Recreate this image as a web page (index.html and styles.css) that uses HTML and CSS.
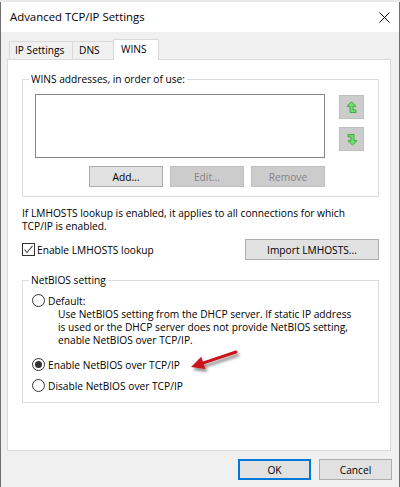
FILE: index.html
```html
<!DOCTYPE html>
<html>
<head>
<meta charset="utf-8">
<link rel="stylesheet" href="styles.css">
</head>
<body>
<div class="strip"></div>
<div class="window">
  <div class="titlebar">
    <span class="title">Advanced TCP/IP Settings</span>
    <svg class="close" width="11" height="11" viewBox="0 0 11 11"><path d="M0.5 0.5 L10.5 10.5 M10.5 0.5 L0.5 10.5" stroke="#000" stroke-width="1" fill="none"/></svg>
  </div>
  <div class="body">
    <div class="tabs">
      <div class="tab tab-ip">IP Settings</div>
      <div class="tab tab-dns">DNS</div>
      <div class="tab tab-wins selected">WINS</div>
    </div>
    <div class="panel">
      <fieldset class="group">
        <legend>WINS addresses, in order of use:</legend>
        <div class="group-body wins-body">
          <div class="wins-row">
            <div class="listbox"></div>
            <div class="updown">
              <div class="arrowbtn">
                <svg width="12" height="13" viewBox="0 0 12 13"><path d="M5.5 0.8 L10 5.3 L7 5.3 L7 9 L10 9 L10 11.5 L4 11.5 L4 5.3 L1 5.3 Z" fill="#6ee06e" stroke="#3aa23a" stroke-width="0.9" stroke-linejoin="round"/></svg>
              </div>
              <div class="arrowbtn">
                <svg width="12" height="13" viewBox="0 0 12 13"><g transform="rotate(180 6 6.5)"><path d="M5.5 0.8 L10 5.3 L7 5.3 L7 9 L10 9 L10 11.5 L4 11.5 L4 5.3 L1 5.3 Z" fill="#6ee06e" stroke="#3aa23a" stroke-width="0.9" stroke-linejoin="round"/></g></svg>
              </div>
            </div>
          </div>
          <div class="btn-row">
            <div class="btn w74">Add...</div>
            <div class="btn w74 disabled">Edit...</div>
            <div class="btn w74 disabled">Remove</div>
          </div>
        </div>
      </fieldset>
      <p class="note">If LMHOSTS lookup is enabled, it applies to all connections for which TCP/IP is enabled.</p>
      <div class="lm-row">
        <label class="check-label">
          <span class="checkbox">
            <svg width="11" height="11" viewBox="0 0 11 11"><path d="M1.5 5.5 L4 8.5 L9.5 1.8" stroke="#444" stroke-width="1.1" fill="none"/></svg>
          </span>
          Enable LMHOSTS lookup
        </label>
        <div class="btn import">Import LMHOSTS...</div>
      </div>
      <fieldset class="group group-netbios">
        <legend>NetBIOS setting</legend>
        <div class="group-body netbios-body">
          <div class="radio-row"><span class="radio"></span>Default:</div>
          <div class="desc">Use NetBIOS setting from the DHCP server. If static IP address is used or the DHCP server does not provide NetBIOS setting, enable NetBIOS over TCP/IP.</div>
          <div class="radio-row enable"><span class="radio checked"></span>Enable NetBIOS over TCP/IP</div>
          <div class="radio-row disable"><span class="radio"></span>Disable NetBIOS over TCP/IP</div>
        </div>
      </fieldset>
      <svg class="annot" width="70" height="40" viewBox="0 0 70 40">
        <defs>
          <filter id="sh" x="-30%" y="-30%" width="160%" height="160%">
            <feGaussianBlur in="SourceAlpha" stdDeviation="1.6"/>
            <feOffset dx="2" dy="3" result="b"/>
            <feComponentTransfer><feFuncA type="linear" slope="0.45"/></feComponentTransfer>
            <feMerge><feMergeNode/><feMergeNode in="SourceGraphic"/></feMerge>
          </filter>
        </defs>
        <g filter="url(#sh)">
          <path d="M56 12 L23.5 22.8" stroke="#c8161b" stroke-width="3" stroke-linecap="round"/>
          <path d="M11 27 L25.4 29 L21.2 16.8 Z" fill="#c8161b"/>
        </g>
      </svg>
    </div>
    <div class="footer">
      <div class="btn w73 default">OK</div>
      <div class="btn w73">Cancel</div>
    </div>
  </div>
</div>
</body>
</html>
```

FILE: styles.css
```css
* { box-sizing: border-box; }
html, body { margin: 0; padding: 0; }
body {
  width: 400px;
  height: 487px;
  overflow: hidden;
  font-family: "Open Sans", "Liberation Sans", Arial, sans-serif;
  font-size: 10.2px;
  color: #000;
  background: #fff;
}
.strip {
  height: 2px;
  background: #e8e8e8;
}
.window {
  height: 485px;
  border-left: 1px solid #707070;
  border-right: 1px solid #707070;
  display: flex;
  flex-direction: column;
}
.titlebar {
  height: 30px;
  background: #fff;
  display: flex;
  align-items: center;
  justify-content: space-between;
  padding: 0 9px 0 9px;
}
.title {
  font-size: 11.4px;
  margin-top: -1px;
}
.body {
  flex: 1;
  background: #f0f0f0;
  padding: 7px 8px 0 6px;
}
.tabs {
  display: flex;
  align-items: flex-end;
  height: 20px;
  padding-left: 2px;
  position: relative;
  z-index: 1;
  white-space: nowrap;
}
.tab {
  height: 18px;
  border: 1px solid #d9d9d9;
  border-bottom: none;
  background: #f0f0f0;
  line-height: 17px;
  padding-left: 5px;
}
.tab-ip { width: 64px; }
.tab-dns { width: 42px; margin-left: -1px; padding-left: 6px; }
.tab-wins { margin-left: -1px; }
.tab.selected {
  width: 46px;
  height: 21px;
  margin-bottom: -1px;
  background: #fff;
  line-height: 19px;
  padding-left: 7px;
}
.panel {
  position: relative;
  width: 384px;
  height: 392px;
  background: #fff;
  border: 1px solid #d9d9d9;
  padding: 12px 0 0 14px;
}
.group {
  margin: 0;
  padding: 0;
  width: 357px;
  border: 1px solid #dcdcdc;
  min-inline-size: 0;
}
.group legend {
  margin-left: 6px;
  padding: 0 2px;
  line-height: 15px;
}
.wins-body { padding: 7px 0 9px 12px; }
.wins-row {
  display: flex;
  align-items: flex-start;
  gap: 14px;
}
.listbox {
  width: 290px;
  height: 64px;
  border: 1px solid #828790;
  background: #fff;
}
.updown {
  margin-top: 1px;
  display: flex;
  flex-direction: column;
  gap: 8px;
}
.arrowbtn {
  width: 25px;
  height: 24px;
  background: #cccccc;
  border: 1px solid #bfbfbf;
  display: flex;
  align-items: center;
  justify-content: center;
}
.btn-row {
  display: flex;
  gap: 7px;
  margin-top: 8px;
  padding-left: 54px;
}
.btn {
  height: 21px;
  background: #e1e1e1;
  border: 1px solid #adadad;
  display: flex;
  align-items: center;
  justify-content: center;
  white-space: nowrap;
}
.w74 { width: 74px; }
.w73 { width: 73px; }
.btn.disabled {
  background: #cccccc;
  border-color: #bfbfbf;
  color: #838383;
}
.btn.default {
  border: 2px solid #0078d7;
}
.note {
  margin: 10px 0 0 0;
  line-height: 13px;
  width: 340px;
}
.lm-row {
  width: 357px;
  margin-top: 6px;
  display: flex;
  align-items: center;
  justify-content: space-between;
}
.check-label {
  display: flex;
  align-items: center;
  gap: 2px;
}
.checkbox {
  width: 13px;
  height: 13px;
  border: 1px solid #333;
  background: #fff;
  display: flex;
  align-items: center;
  justify-content: center;
}
.import { width: 134px; }
.group-netbios { margin-top: 13px; }
.netbios-body { padding: 5px 0 9px 9px; }
.radio-row {
  display: flex;
  align-items: center;
  gap: 3px;
  height: 15px;
}
.radio {
  width: 13px;
  height: 13px;
  border: 1px solid #333;
  border-radius: 50%;
  background: #fff;
  position: relative;
}
.radio.checked::after {
  content: "";
  position: absolute;
  left: 2px;
  top: 2px;
  width: 7px;
  height: 7px;
  border-radius: 50%;
  background: #333;
}
.desc {
  padding-left: 26px;
  line-height: 13px;
  width: 324px;
}
.radio-row.enable { margin-top: 10px; }
.radio-row.disable { margin-top: 6px; }
.annot {
  position: absolute;
  left: 172px;
  top: 280px;
}
.footer {
  display: flex;
  justify-content: flex-end;
  gap: 8px;
  margin-top: 8px;
  margin-right: -1px;
}
```
